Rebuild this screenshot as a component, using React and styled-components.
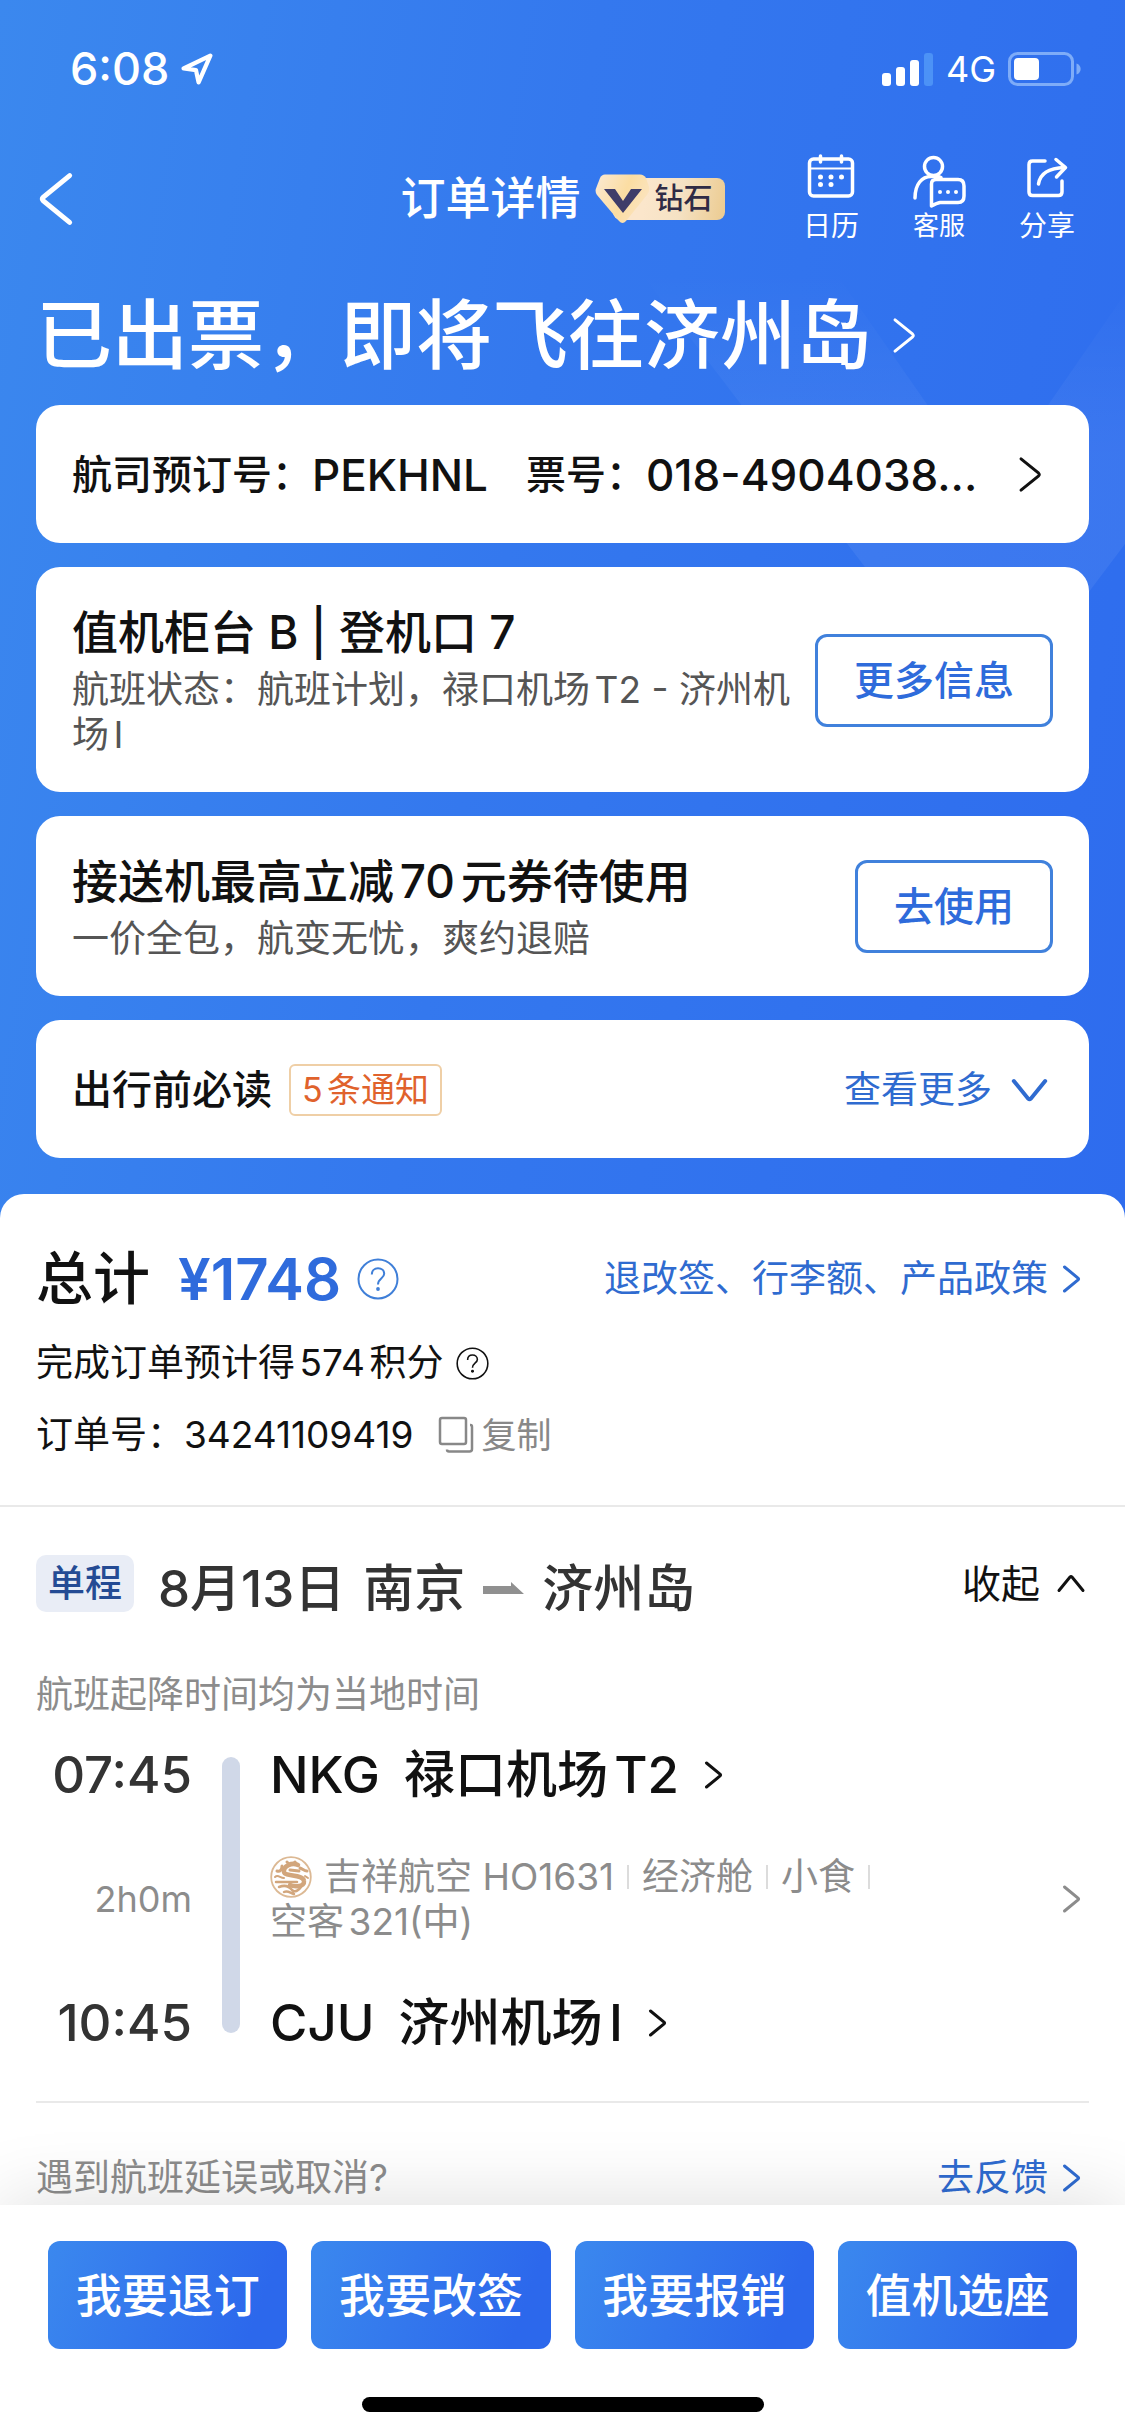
import styled, { createGlobalStyle } from "styled-components";

const GlobalStyle = createGlobalStyle`
    * {
        box-sizing: border-box;
    }

    body {
        margin: 0;
        background: #fff;
        color: #111;
        font-family: "Inter", "Noto Sans CJK SC", sans-serif;
        font-size: 37px;
        line-height: 48px;
        text-autospace: normal;
    }

    h1, h2, h3, p {
        margin: 0;
        font-weight: 500;
    }

    a {
        color: inherit;
        text-decoration: none;
    }

    button {
        margin: 0;
        padding: 0;
        border: 0;
        background: none;
        color: inherit;
        font: inherit;
        cursor: pointer;
    }

    svg {
        display: block;
        flex: none;
    }
`;

const turns = { right: 0, down: 90, left: 180, up: 270 };

const Chevron = ({ size = 36, turn = "right", width = 3 }) => (
    <svg width={size} height={size} viewBox="0 0 36 36" fill="none">
        <path
            d="M11.5 6 L25 17 Q26 18 25 19 L11.5 30"
            transform={`rotate(${turns[turn]} 18 18)`}
            stroke="currentColor"
            strokeWidth={width}
            strokeLinecap="round"
            vectorEffect="non-scaling-stroke"
        />
    </svg>
);

const Question = ({ size, width }) => (
    <svg width={size} height={size} viewBox="0 0 42 42" fill="none">
        <g stroke="currentColor" strokeWidth={width}>
            <circle cx="21" cy="21" r="19.5" />
            <path d="M14.8 16.5 C14.8 12.6 17.5 10.2 21 10.2 C24.6 10.2 27.2 12.6 27.2 15.8 C27.2 20.4 21 20.2 21 26.5" />
        </g>
        <circle cx="21" cy="31" r="1.9" fill="currentColor" />
    </svg>
);

const LocationArrow = () => (
    <svg width="32" height="32" viewBox="0 0 30 30" fill="none">
        <path
            d="M27.5 2.5 L2.5 14.5 L14 16 L16.5 27.5 Z"
            stroke="#fff"
            strokeWidth="4"
            strokeLinejoin="round"
        />
    </svg>
);

const Signal = () => (
    <svg width="52" height="33" viewBox="0 0 52 33" fill="#fff">
        <rect x="0" y="20" width="9" height="13" rx="3" />
        <rect x="14" y="14" width="9" height="19" rx="3" />
        <rect x="28" y="7" width="9" height="26" rx="3" />
        <rect x="42" y="0" width="9" height="33" rx="3" fill="#4c92f6" />
    </svg>
);

const Battery = () => (
    <svg width="74" height="34" viewBox="0 0 74 34">
        <rect
            x="1.5"
            y="1.5"
            width="63"
            height="31"
            rx="8"
            fill="none"
            stroke="#7eacf8"
            strokeWidth="3"
        />
        <rect x="6" y="6" width="25" height="22" rx="4" fill="#fff" />
        <path d="M68.5 11.5 C74 13 74 21 68.5 22.5 Z" fill="#7eacf8" />
    </svg>
);

const CalendarIcon = () => (
    <svg width="56" height="58" viewBox="0 0 56 58" fill="none">
        <g stroke="#fff" strokeWidth="3.5" strokeLinecap="round">
            <rect x="6.5" y="9" width="43" height="37" rx="4" />
            <path d="M17.5 6 V12 M38.5 6 V12" />
        </g>
        <path d="M7 18.5 H49" stroke="#fff" strokeWidth="2" />
        <g fill="#fff">
            <circle cx="17.5" cy="27" r="2.5" />
            <circle cx="28" cy="27" r="2.5" />
            <circle cx="38.5" cy="27" r="2.5" />
            <circle cx="17.5" cy="34.5" r="2.5" />
            <circle cx="28" cy="34.5" r="2.5" />
        </g>
    </svg>
);

const ServiceIcon = () => (
    <svg width="56" height="58" viewBox="0 0 56 58" fill="none">
        <g
            stroke="#fff"
            strokeWidth="3.5"
            strokeLinecap="round"
            strokeLinejoin="round"
        >
            <circle cx="22.5" cy="16.5" r="9" />
            <path d="M4 48 C4 34 11 26.5 20 26.5 C24 26 27 26 30 27.5" />
            <path d="M24 29.5 H47 Q53 29.5 53 36 V46 Q53 52.5 47 52.5 H29 Q26 53 20.5 56 V34 Q20.5 29.5 25 29.5 Z" />
        </g>
        <g fill="#fff">
            <circle cx="29" cy="42" r="2" />
            <circle cx="37" cy="42" r="2" />
            <circle cx="45" cy="42" r="2" />
        </g>
    </svg>
);

const ShareIcon = () => (
    <svg width="56" height="58" viewBox="0 0 56 58" fill="none">
        <g
            stroke="#fff"
            strokeWidth="3.5"
            strokeLinecap="round"
            strokeLinejoin="round"
        >
            <path d="M26 11 H13.5 Q10 11 10 14.5 V42 Q10 45.5 13.5 45.5 H39.5 Q43 45.5 43 42 V31" />
            <path d="M19.5 34 C21 24 29 18 45.5 17.5" />
            <path d="M37 9.5 L46.5 17.5 L37.5 27" />
        </g>
    </svg>
);

const CopyIcon = () => (
    <svg width="38" height="38" viewBox="0 0 38 38" fill="none">
        <g stroke="currentColor" strokeWidth="2.5">
            <rect x="2" y="2" width="26" height="26" rx="2" />
            <path d="M32 9 H32.5 Q34 9 34 11 V33 Q34 35.5 31.5 35.5 H11 Q9 35.5 9 33.5" />
        </g>
    </svg>
);

const RouteArrow = () => (
    <svg width="41" height="14" viewBox="0 0 41 14" fill="#909090">
        <path d="M0 4 H28 V0 L41 12 H0 Z" />
    </svg>
);

const DiamondV = () => (
    <svg width="58" height="50" viewBox="0 0 58 50">
        <defs>
            <linearGradient id="gem" x1="0" y1="0" x2="1" y2="0.4">
                <stop offset="0" stopColor="#fbe9d3" />
                <stop offset="0.6" stopColor="#fbdda2" />
                <stop offset="1" stopColor="#fbe3bd" />
            </linearGradient>
        </defs>
        <path
            d="M10 0.5 H45 Q49 0.5 51 4 L54 13 Q55 17 52 21 L31 47 Q27.5 51 24 47 L2 21 Q0 18 0.8 15 L5 4 Q6.5 0.5 10 0.5 Z"
            fill="url(#gem)"
        />
        <path d="M9 15 H20 L28 27 L36 15 H47 L28 39 Z" fill="#3f3d69" />
    </svg>
);

// round dragon mark of the airline
const AirlineLogo = () => (
    <svg width="42" height="42" viewBox="0 0 42 42" fill="none">
        <circle cx="21" cy="21" r="19.8" stroke="#dcb994" strokeWidth="1.8" />
        <g stroke="#d2a67c" strokeLinecap="round">
            <path
                d="M28 9 C22 6 13 10 14 16 C15 21 33 18 34 25 C35 31 24 31 20 29"
                strokeWidth="4.5"
            />
            <path
                d="M7 15 C10 16 12 14 12 10 M17 6 C19 9 23 9 25 6 M30 12 C33 13 34 15 37 15 M20 14 L29 15"
                strokeWidth="3"
            />
            <path
                d="M6 26 H27 M9 31 C14 29 19 30 22 34 C25 37 29 34 31 31 M14 36 C18 34 20 37 24 38"
                strokeWidth="2.5"
            />
            <path d="M5 21 C8 18 10 22 14 22 M35 20 L38 22" strokeWidth="2" />
        </g>
    </svg>
);

const Page = styled.div`
    display: flex;
    flex-direction: column;
    min-height: 100vh;
`;

const Hero = styled.header`
    position: relative;
    padding-bottom: 60px;
    background: linear-gradient(100deg, #3b88ee 0%, #3478ee 45%, #2e6cee 100%);
    color: #fff;
`;

const Watermark = styled.svg`
    position: absolute;
    top: 272px;
    right: 0;
`;

const StatusBar = styled.div`
    display: flex;
    align-items: center;
    justify-content: space-between;
    padding: 46px 43px 0 70px;
    line-height: 46px;
`;

const StatusGroup = styled.div`
    display: flex;
    align-items: center;
    gap: 12px;
`;

const Clock = styled.span`
    font-size: 45px;
    font-weight: 500;
`;

const Network = styled.span`
    font-size: 36px;
`;

const NavBar = styled.nav`
    display: grid;
    grid-template-columns: 1fr auto 1fr;
    align-items: center;
    height: 98px;
    margin-top: 58px;
    padding: 0 50px 0 22px;
`;

const BackButton = styled.button`
    justify-self: start;
`;

const NavTitle = styled.div`
    display: flex;
    align-items: center;
    gap: 14px;
    padding-left: 28px;

    h2 {
        font-size: 45px;
    }
`;

const Level = styled.div`
    display: flex;
    align-items: center;

    svg {
        position: relative;
        z-index: 1;
    }
`;

const LevelName = styled.span`
    margin-left: -40px;
    padding: 0 12px 0 42px;
    border-radius: 8px;
    background: linear-gradient(100deg, #fbe6cb 30%, #f5e2c4 60%, #eccb90);
    color: #2f2b45;
    font-size: 29px;
    font-weight: 500;
    line-height: 42px;
`;

const Tools = styled.div`
    display: flex;
    justify-content: flex-end;
    align-self: start;
    gap: 52px;
`;

const Tool = styled.button`
    display: flex;
    flex-direction: column;
    align-items: center;
    font-size: ${(props) => (props.$small ? 26 : 28)}px;
    line-height: 36px;
`;

const Headline = styled.a`
    display: flex;
    align-items: center;
    gap: 8px;
    padding: 42px 36px 25px;

    h1 {
        font-size: 76px;
        line-height: 90px;
    }
`;

const Cards = styled.div`
    position: relative;
    display: flex;
    flex-direction: column;
    gap: 24px;
    padding: 0 36px;
    color: #111;
`;

const Card = styled.section`
    display: flex;
    align-items: center;
    justify-content: space-between;
    gap: 20px;
    min-height: 138px;
    padding: 36px 36px 35px;
    border-radius: 24px;
    background: #fff;
`;

const Booking = styled.p`
    display: flex;
    align-items: center;
    min-width: 0;
    font-size: 40px;
    white-space: nowrap;

    b {
        margin-right: 38px;
        font-size: 44px;
        font-weight: 500;
    }

    b:last-child {
        margin-right: 0;
    }
`;

const CardTitle = styled.h3`
    font-size: ${(props) => (props.$small ? 40 : 46)}px;
    line-height: 58px;
`;

const CardText = styled.p`
    margin-top: 6px;
    color: #555;
    font-weight: 400;
    line-height: 45px;
`;

const OutlineButton = styled.button`
    flex: none;
    padding: 0 36px;
    border: 3px solid #4081dc;
    border-radius: 12px;
    color: #2e6bdb;
    font-size: 40px;
    font-weight: 500;
    line-height: 87px;
`;

const Notice = styled.div`
    display: flex;
    align-items: center;
    gap: 17px;
`;

const NoticeCount = styled.span`
    padding: 0 11px;
    border: 2px solid #efcfa6;
    border-radius: 6px;
    color: #e0622c;
    font-size: 34px;
    line-height: 48px;
`;

const BlueLink = styled.a`
    display: flex;
    align-items: center;
    gap: ${(props) => props.$gap || 5}px;
    color: #2f6bd0;
`;

const Sheet = styled.main`
    position: relative;
    flex: 1;
    margin-top: -24px;
    border-radius: 24px 24px 0 0;
    background: #fff;
`;

const Summary = styled.section`
    display: flex;
    flex-direction: column;
    gap: 24px;
    padding: 49px 36px 46px;
    border-bottom: 2px solid #e9e9e9;
`;

const Row = styled.div`
    display: flex;
    align-items: center;
    gap: ${(props) => props.$gap || 0}px;
`;

const TotalRow = styled(Row)`
    justify-content: space-between;
    line-height: 72px;
`;

const TotalLabel = styled.h2`
    margin-right: 12px;
    font-size: 57px;
`;

const Price = styled.strong`
    color: #2f6bdc;
    font-size: 58px;
    font-weight: 600;
`;

const HelpButton = styled.button`
    color: ${(props) => props.$color};
`;

const CopyButton = styled.button`
    display: flex;
    align-items: center;
    gap: 5px;
    margin-left: 25px;
    color: #888;
    font-size: 35px;
`;

const Trip = styled.section`
    padding: 48px 36px 0;
`;

const TripHead = styled.div`
    display: flex;
    align-items: flex-start;
    gap: 24px;
`;

const TripType = styled.span`
    padding: 0 12px;
    border-radius: 10px;
    background: #e9edf6;
    color: #244b94;
    font-weight: 500;
    line-height: 57px;
`;

const Route = styled.h2`
    display: flex;
    flex: 1;
    align-items: center;
    gap: 18px;
    color: #333;
    font-size: 51px;
    line-height: 68px;
    text-autospace: no-autospace;
`;

const FoldButton = styled.button`
    display: flex;
    align-items: center;
    gap: 13px;
    font-size: 39px;
    line-height: 57px;
`;

const Hint = styled.p`
    margin-top: 48px;
    color: #8c8c8c;
    font-weight: 400;
`;

const Timeline = styled.div`
    display: grid;
    grid-template-columns: 156px 18px 1fr;
    align-items: center;
    gap: 49px 30px;
    margin-top: 26px;
    padding-bottom: 48px;
    border-bottom: 2px solid #e9e9e9;
`;

const Track = styled.div`
    grid-row: 1 / 4;
    grid-column: 2;
    align-self: stretch;
    margin: 12px 0 20px;
    border-radius: 9px;
    background: #d0d8e8;
`;

const Time = styled.time`
    grid-column: 1;
    color: #333;
    font-size: 51px;
    font-weight: 500;
    line-height: 60px;
    text-align: right;
`;

const Duration = styled.span`
    grid-column: 1;
    color: #8c8c8c;
    font-size: 36px;
    text-align: right;
`;

const Airport = styled.a`
    grid-column: 3;
    display: flex;
    align-items: center;
    gap: 16px;
    font-size: 51px;
    font-weight: 500;
    line-height: 60px;

    b {
        margin-right: 8px;
        font-weight: 500;
    }
`;

const Flight = styled.a`
    grid-column: 3;
    display: flex;
    align-items: center;
    justify-content: space-between;
    color: #8c8c8c;
`;

const FlightFacts = styled.div`
    display: flex;
    flex: 1;
    flex-wrap: wrap;
    align-items: center;
    line-height: 45px;

    svg {
        margin-right: 12px;
    }
`;

const Fact = styled.span`
    display: flex;
    align-items: center;

    &:not(:last-child)::after {
        content: "";
        width: 2px;
        height: 24px;
        margin: 0 13px;
        background: #dcdcdc;
    }
`;

const Feedback = styled.div`
    display: flex;
    align-items: center;
    justify-content: space-between;
    padding-top: 51px;
    color: #8c8c8c;
`;

const Footer = styled.footer`
    position: relative;
    padding: 36px 48px 24px;
    background: #fff;
    box-shadow: 0 -6px 70px rgba(0, 0, 0, 0.12);
`;

const Actions = styled.div`
    display: grid;
    grid-template-columns: repeat(4, 1fr);
    gap: 24px;
`;

const Action = styled.button`
    border-radius: 12px;
    background: linear-gradient(110deg, #3b88ee, #2c68ec 85%);
    color: #fff;
    font-size: 46px;
    font-weight: 500;
    line-height: 108px;
`;

const HomeBar = styled.div`
    width: 402px;
    height: 15px;
    margin: 48px auto 0;
    border-radius: 8px;
    background: #000;
`;

const actions = ["我要退订", "我要改签", "我要报销", "值机选座"];

export default function App() {
    return (
        <Page>
            <GlobalStyle />
            <Hero>
                <Watermark width="485" height="455" viewBox="0 0 485 455">
                    <defs>
                        <linearGradient id="fade" x1="0" y1="0" x2="0" y2="1">
                            <stop offset="0" stopColor="#fff" stopOpacity="0" />
                            <stop
                                offset="0.4"
                                stopColor="#fff"
                                stopOpacity="0.06"
                            />
                        </linearGradient>
                    </defs>
                    <path
                        d="M0 0 H195 L348 220 L500 0 H690 L347 455 Z"
                        fill="url(#fade)"
                    />
                </Watermark>
                <StatusBar>
                    <StatusGroup>
                        <Clock>6:08</Clock>
                        <LocationArrow />
                    </StatusGroup>
                    <StatusGroup>
                        <Signal />
                        <Network>4G</Network>
                        <Battery />
                    </StatusGroup>
                </StatusBar>
                <NavBar>
                    <BackButton aria-label="返回">
                        <Chevron size={70} turn="left" width={5} />
                    </BackButton>
                    <NavTitle>
                        <h2>订单详情</h2>
                        <Level>
                            <DiamondV />
                            <LevelName>钻石</LevelName>
                        </Level>
                    </NavTitle>
                    <Tools>
                        <Tool>
                            <CalendarIcon />
                            日历
                        </Tool>
                        <Tool $small>
                            <ServiceIcon />
                            客服
                        </Tool>
                        <Tool>
                            <ShareIcon />
                            分享
                        </Tool>
                    </Tools>
                </NavBar>
                <Headline href="#">
                    <h1>已出票，即将飞往济州岛</h1>
                    <Chevron size={47} />
                </Headline>
                <Cards>
                    <Card>
                        <Booking>
                            航司预订号：<b>PEKHNL</b>
                            票号：<b>018-4904038...</b>
                        </Booking>
                        <Chevron size={47} />
                    </Card>
                    <Card>
                        <div>
                            <CardTitle>值机柜台 B | 登机口 7</CardTitle>
                            <CardText>
                                航班状态：航班计划，禄口机场T2 - 济州机场I
                            </CardText>
                        </div>
                        <OutlineButton>更多信息</OutlineButton>
                    </Card>
                    <Card>
                        <div>
                            <CardTitle>接送机最高立减70元券待使用</CardTitle>
                            <CardText>一价全包，航变无忧，爽约退赔</CardText>
                        </div>
                        <OutlineButton>去使用</OutlineButton>
                    </Card>
                    <Card>
                        <Notice>
                            <CardTitle $small>出行前必读</CardTitle>
                            <NoticeCount>5条通知</NoticeCount>
                        </Notice>
                        <BlueLink href="#" $gap={14}>
                            查看更多
                            <Chevron size={47} turn="down" width={4} />
                        </BlueLink>
                    </Card>
                </Cards>
            </Hero>

            <Sheet>
                <Summary>
                    <TotalRow>
                        <Row $gap={16}>
                            <TotalLabel>总计</TotalLabel>
                            <Price>¥1748</Price>
                            <HelpButton $color="#3f7fd8" aria-label="价格说明">
                                <Question size={42} width={2} />
                            </HelpButton>
                        </Row>
                        <BlueLink href="#">
                            退改签、行李额、产品政策
                            <Chevron />
                        </BlueLink>
                    </TotalRow>
                    <Row $gap={13}>
                        <span>完成订单预计得574积分</span>
                        <HelpButton $color="#111" aria-label="积分说明">
                            <Question size={33} width={2} />
                        </HelpButton>
                    </Row>
                    <Row>
                        <span>订单号：34241109419</span>
                        <CopyButton>
                            <CopyIcon />
                            复制
                        </CopyButton>
                    </Row>
                </Summary>

                <Trip>
                    <TripHead>
                        <TripType>单程</TripType>
                        <Route>
                            <span>8月13日</span>
                            <span>南京</span>
                            <RouteArrow />
                            <span>济州岛</span>
                        </Route>
                        <FoldButton>
                            收起
                            <Chevron turn="up" />
                        </FoldButton>
                    </TripHead>
                    <Hint>航班起降时间均为当地时间</Hint>
                    <Timeline>
                        <Track />
                        <Time>07:45</Time>
                        <Airport href="#">
                            <b>NKG</b>
                            禄口机场T2
                            <Chevron />
                        </Airport>
                        <Duration>2h0m</Duration>
                        <Flight href="#">
                            <FlightFacts>
                                <AirlineLogo />
                                <Fact>吉祥航空 HO1631</Fact>
                                <Fact>经济舱</Fact>
                                <Fact>小食</Fact>
                                <Fact>空客321(中)</Fact>
                            </FlightFacts>
                            <Chevron />
                        </Flight>
                        <Time>10:45</Time>
                        <Airport href="#">
                            <b>CJU</b>
                            济州机场I
                            <Chevron />
                        </Airport>
                    </Timeline>
                    <Feedback>
                        遇到航班延误或取消?
                        <BlueLink href="#">
                            去反馈
                            <Chevron />
                        </BlueLink>
                    </Feedback>
                </Trip>
            </Sheet>

            <Footer>
                <Actions>
                    {actions.map((name) => (
                        <Action key={name}>{name}</Action>
                    ))}
                </Actions>
                <HomeBar />
            </Footer>
        </Page>
    );
}
